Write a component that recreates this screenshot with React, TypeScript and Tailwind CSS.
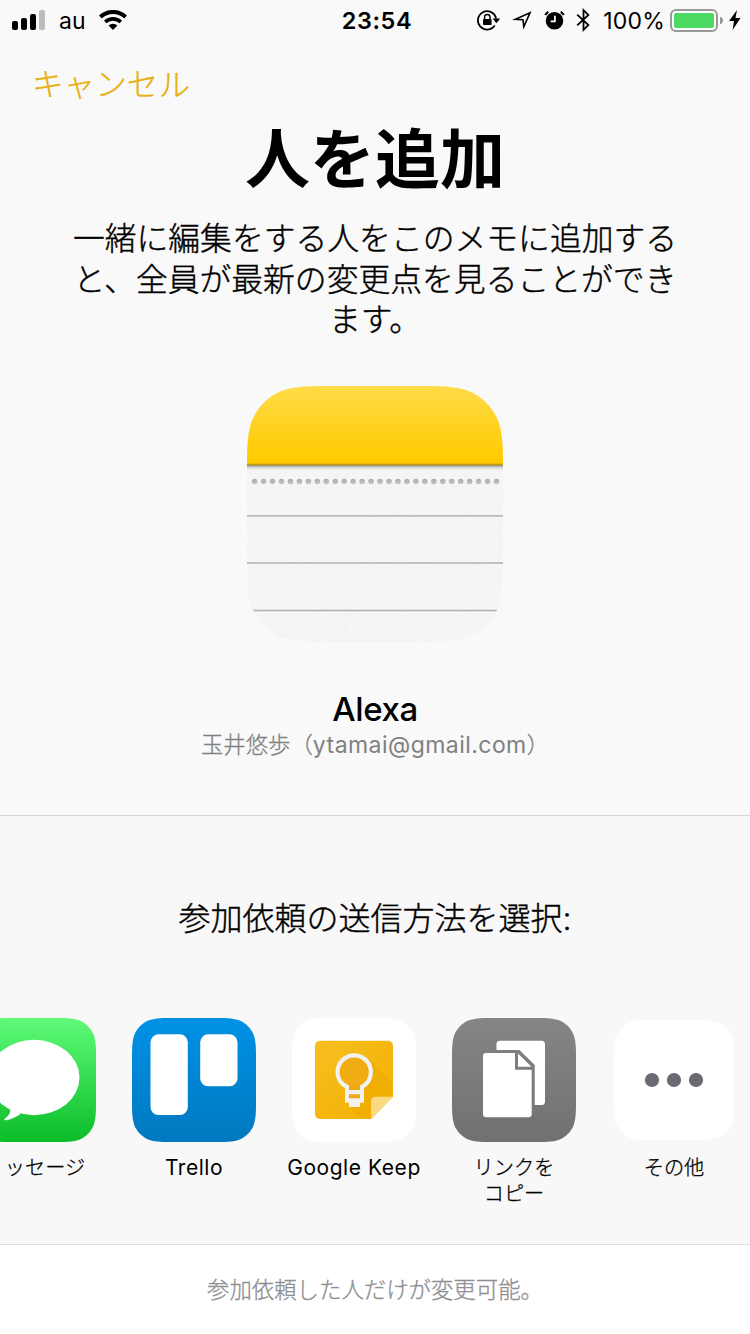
import type { ReactNode } from "react";

const SQUIRCLE =
  "M0 34.4C0 24.5 0 19.54 1.69 14.2C3.8 8.39 8.39 3.8 14.2 1.69C19.54 0 24.5 0 34.4 0H65.6C75.5 0 80.46 0 85.8 1.69C91.61 3.8 96.2 8.39 98.31 14.2C100 19.54 100 24.5 100 34.4V65.6C100 75.5 100 80.46 98.31 85.8C96.2 91.61 91.61 96.2 85.8 98.31C80.46 100 75.5 100 65.6 100H34.4C24.5 100 19.54 100 14.2 98.31C8.39 96.2 3.8 91.61 1.69 85.8C0 80.46 0 75.5 0 65.6Z";

function StatusBar() {
  return (
    <header className="grid h-10 shrink-0 grid-cols-3 items-center text-black">
      <div className="flex items-center pl-3">
        <svg className="shrink-0" width="34" height="20" viewBox="0 0 34 20">
          <rect x="0" y="11" width="6" height="9" rx="2" />
          <rect x="9" y="8" width="6" height="12" rx="2" />
          <rect x="18" y="4" width="6" height="16" rx="2" />
          <rect x="27" y="0" width="6" height="20" rx="2" fill="#bcbcbc" />
        </svg>
        <span className="ml-[13px] pt-px text-[23px] leading-[38px] tracking-[0.2px]">au</span>
        <svg className="ml-[13px] shrink-0" width="28" height="20" viewBox="0 0 28 20">
          <path d="M1.4 7A18.2 18.2 0 0 1 26.6 7" fill="none" stroke="#000" strokeWidth="4" />
          <path d="M6.2 12A11.2 11.2 0 0 1 21.8 12" fill="none" stroke="#000" strokeWidth="3.6" />
          <path d="M14 20L9.6 15.6A6.4 6.4 0 0 1 18.4 15.6Z" />
        </svg>
      </div>
      <div className="pt-[2px] pl-[4px] text-center text-[23.5px] leading-[38px] font-semibold tracking-[0.6px]">23:54</div>
      <div className="flex items-center justify-end pr-[9px]">
        <svg className="shrink-0" width="24" height="22" viewBox="0 0 24 22">
          <path d="M17.7 16.6A9.2 9.2 0 1 1 19.1 9.5" fill="none" stroke="#000" strokeWidth="1.8" />
          <path d="M15.6 9.4H23.2L19.4 14.2Z" />
          <rect x="6" y="10" width="8.6" height="6" rx=".8" />
          <path d="M7.6 10.5V8.1A2.7 2.7 0 0 1 13 8.1V10.5" fill="none" stroke="#000" strokeWidth="1.5" />
        </svg>
        <svg className="ml-3 shrink-0 overflow-visible" width="20" height="20" viewBox="0 0 20 20">
          <path
            d="M2.4 9.3L17 2.8L10.8 16.8L10 9.8Z"
            fill="none"
            stroke="#000"
            strokeWidth="1.6"
            strokeMiterlimit="10"
          />
        </svg>
        <svg className="ml-[11px] shrink-0" width="21" height="20" viewBox="0 0 21 20">
          <circle cx="10.5" cy="10.7" r="8.8" />
          <path d="M1.2 5A10 10 0 0 1 4.3 1.8M19.8 5A10 10 0 0 0 16.7 1.8" stroke="#000" strokeWidth="2" fill="none" />
          <path d="M10.9 5.8V11.3H6.6" fill="none" stroke="#fff" strokeWidth="1.7" />
        </svg>
        <svg className="ml-[11px] shrink-0" width="15" height="24" viewBox="0 0 15 24">
          <path d="M1.2 6.6L12.4 17L7.5 21.8V2.2L12.4 7L1.2 17.4" fill="none" stroke="#000" strokeWidth="1.8" />
        </svg>
        <span className="ml-[12px] pt-px text-[23px] leading-[38px] tracking-[0.2px]">100%</span>
        <svg className="ml-[5px] shrink-0" width="54" height="24" viewBox="0 0 54 24">
          <rect x="1" y="2" width="46" height="21" rx="5" fill="#fff" stroke="#999" strokeWidth="2" />
          <rect x="4" y="5" width="40" height="15" rx="2" fill="#4cd964" />
          <path d="M50 8.8C54 10 54 15 50 16.4Z" fill="#999" />
        </svg>
        <svg className="ml-[5px] shrink-0" width="12" height="20" viewBox="0 0 12 20">
          <path d="M8 0L0 11H5L3.6 20L11.5 8H6.5Z" />
        </svg>
      </div>
    </header>
  );
}

function NotesIcon() {
  return (
    <svg className="block shrink-0" width="256" height="256" viewBox="0 0 256 256">
      <defs>
        <linearGradient id="pad" x1="0" y1="0" x2="0" y2="1">
          <stop offset="0" stopColor="#ffdb48" />
          <stop offset=".8" stopColor="#ffcd0a" />
          <stop offset="1" stopColor="#ffca00" />
        </linearGradient>
        <linearGradient id="shade" x1="0" y1="0" x2="0" y2="1">
          <stop offset="0" stopColor="#d8ac08" />
          <stop offset=".2" stopColor="#b39417" />
          <stop offset=".35" stopColor="#a3a3a3" />
          <stop offset=".6" stopColor="#dcdcdc" />
          <stop offset="1" stopColor="#f4f4f4" />
        </linearGradient>
        <linearGradient id="hole" x1="0" y1="0" x2="0" y2="1">
          <stop offset="0" stopColor="#a9a9a9" />
          <stop offset="1" stopColor="#c6c6c6" />
        </linearGradient>
        <filter id="grain" x="0" y="0" width="1" height="1">
          <feTurbulence type="fractalNoise" baseFrequency=".16" numOctaves="2" seed="4" />
          <feColorMatrix values="0 0 0 0 .8  0 0 0 0 .8  0 0 0 0 .8  .3 0 0 0 -.06" />
        </filter>
        <clipPath id="notes">
          <path d={SQUIRCLE} transform="scale(2.56)" />
        </clipPath>
      </defs>
      <g clipPath="url(#notes)">
        <rect width="256" height="256" fill="#f6f6f6" />
        <rect y="80" width="256" height="176" filter="url(#grain)" />
        <rect width="256" height="79" fill="url(#pad)" />
        <rect y="77.5" width="256" height="7" fill="url(#shade)" />
        {Array.from({ length: 28 }, (_, i) => (
          <circle key={i} cx={7.6 + i * 8.96} cy="95.5" r="2.8" fill="url(#hole)" />
        ))}
        <rect y="129" width="256" height="1.8" fill="#bdbdbd" />
        <rect y="176.2" width="256" height="1.6" fill="#b5b5b5" />
        <rect x="6" y="223.7" width="244" height="1.6" fill="#b2b2b2" />
      </g>
    </svg>
  );
}

function MessagesIcon() {
  return (
    <svg width="124" height="124" viewBox="0 0 124 124">
      <linearGradient id="green" x1="0" y1="0" x2="0" y2="1">
        <stop offset="0" stopColor="#5ffa78" />
        <stop offset="1" stopColor="#0bbd29" />
      </linearGradient>
      <path d={SQUIRCLE} transform="scale(1.24)" fill="url(#green)" />
      <ellipse cx="62" cy="59.5" rx="45.5" ry="37.7" fill="#fff" />
      <path d="M38 90C39 96 36 98 32.4 101C31.8 102 32.5 102.5 33.5 102.3C40 101.5 45 98 49 96Z" fill="#fff" />
    </svg>
  );
}

function TrelloIcon() {
  return (
    <svg width="124" height="124" viewBox="0 0 124 124">
      <linearGradient id="blue" x1="0" y1="0" x2="0" y2="1">
        <stop offset="0" stopColor="#0091e6" />
        <stop offset="1" stopColor="#0079bf" />
      </linearGradient>
      <path d={SQUIRCLE} transform="scale(1.24)" fill="url(#blue)" />
      <rect x="18.5" y="16.3" width="37.3" height="80.7" rx="8" fill="#fff" />
      <rect x="68.2" y="16.3" width="37.3" height="52" rx="8" fill="#fff" />
    </svg>
  );
}

function KeepIcon() {
  return (
    <svg width="124" height="124" viewBox="0 0 124 124">
      <defs>
        <linearGradient id="keep" x1="0" y1="0" x2="1" y2="1">
          <stop offset="0" stopColor="#f6bf20" />
          <stop offset="1" stopColor="#f4b000" />
        </linearGradient>
        <linearGradient id="cast" x1="0" y1="0" x2="1" y2="1">
          <stop offset="0" stopColor="#eea90a" />
          <stop offset="1" stopColor="#f4b002" />
        </linearGradient>
      </defs>
      <path d={SQUIRCLE} transform="scale(1.24)" fill="#fff" />
      <path
        d="M28 22.7H96A5 5 0 0 1 101 27.7V78.7L79 101H28A5 5 0 0 1 23 96V27.7A5 5 0 0 1 28 22.7Z"
        fill="url(#keep)"
      />
      <path d="M76 41L101 66V78.7H84L79 83V101H70L57 88V70L49 66Z" fill="url(#cast)" />
      <path d="M79 101V83.5A5 5 0 0 1 84 78.7H101Z" fill="#fbd981" />
      <path
        d="M55.3 72V69C49 66 45.5 60.5 45.5 54A16.7 16.7 0 0 1 78.9 54C78.9 60.5 75.5 66 69.6 69V72Z"
        fill="#f0ac12"
        stroke="#f1f1f1"
        strokeWidth="4.2"
      />
      <path d="M53 69.5H72V84.8H68V89H57V84.8H53Z" fill="#f1f1f1" />
      <path d="M57 68H68V72H57ZM57 76.2H68V80.3H57Z" fill="#eda911" />
    </svg>
  );
}

function CopyIcon() {
  return (
    <svg width="124" height="124" viewBox="0 0 124 124">
      <linearGradient id="gray" x1="0" y1="0" x2="0" y2="1">
        <stop offset="0" stopColor="#858585" />
        <stop offset="1" stopColor="#717171" />
      </linearGradient>
      <path d={SQUIRCLE} transform="scale(1.24)" fill="url(#gray)" />
      <path
        d="M44.5 32V26A3.5 3.5 0 0 1 48 22.7H89.5A3.5 3.5 0 0 1 93 26.2V83.5A3.5 3.5 0 0 1 89.5 87H82.7V47L67.5 32Z"
        fill="#fff"
      />
      <path
        d="M34 35H63V51.8H79.7V96A3.3 3.3 0 0 1 76.4 99.3H34.3A3.3 3.3 0 0 1 31 96V38A3 3 0 0 1 34 35Z"
        fill="#fff"
      />
      <path d="M66 35.5L79.5 48.7H66Z" fill="#fff" />
    </svg>
  );
}

function MoreIcon() {
  return (
    <svg width="124" height="124" viewBox="0 0 124 124">
      <path d={SQUIRCLE} transform="translate(2 2) scale(1.2)" fill="#fff" />
      <g fill="#6b6a73">
        <circle cx="40" cy="62" r="7.1" />
        <circle cx="62" cy="62" r="7.1" />
        <circle cx="84" cy="62" r="7.1" />
      </g>
    </svg>
  );
}

function ShareItem({ icon, children }: { icon: ReactNode; children: ReactNode }) {
  return (
    <li className="flex w-40 shrink-0 flex-col items-center">
      {icon}
      <div className="mt-[13px] text-center text-[20.2px] leading-[26px] font-light whitespace-nowrap [-webkit-text-stroke:0.3px]">
        {children}
      </div>
    </li>
  );
}

function Latin({ children }: { children: ReactNode }) {
  return <span className="text-[21px] font-normal tracking-[0.55px] [-webkit-text-stroke:0]">{children}</span>;
}

export default function App() {
  return (
    <div
      lang="ja"
      className="flex h-[1334px] w-[750px] flex-col overflow-hidden bg-[#f9f9f9] font-['Inter','Noto_Sans_CJK_JP',sans-serif] text-black"
    >
      <StatusBar />
      <nav className="flex h-[78px] shrink-0 pt-[25px] pl-[32px]">
        <button className="h-10 text-[31.6px] leading-10 font-light text-[#e6b010] [-webkit-text-stroke:0.3px]">
          キャンセル
        </button>
      </nav>
      <main className="flex h-[697px] shrink-0 flex-col items-center">
        <h1 className="h-[101px] text-[65px] leading-[84px] font-bold">人を追加</h1>
        <p className="h-[167px] text-center text-[31.8px] leading-[40.5px] font-light [-webkit-text-stroke:0.4px]">
          一緒に編集をする人をこのメモに追加する
          <br />
          と、全員が最新の変更点を見ることができ
          <br />
          ます。
        </p>
        <NotesIcon />
        <h2 className="mt-[46px] text-[33px] leading-[42px] font-medium tracking-[-0.4px]">Alexa</h2>
        <p className="text-[22.4px] leading-[30px] font-light text-[#808080] [-webkit-text-stroke:0.3px]">
          玉井悠歩（
          <span className="text-[23px] font-normal tracking-[0.45px] [-webkit-text-stroke:0]">ytamai@gmail.com</span>）
        </p>
      </main>
      <section className="flex h-[429px] shrink-0 flex-col border-t border-[#d8d8d8] bg-[#f8f8f8]">
        <h3 className="pt-[82px] text-center text-[32px] leading-[42px] font-light [-webkit-text-stroke:0.4px]">
          参加依頼の送信方法を選択:
        </h3>
        <ul className="mt-[78px] -ml-[46px] flex">
          <ShareItem icon={<MessagesIcon />}>
            <span className="pl-[22px]">ッセージ</span>
          </ShareItem>
          <ShareItem icon={<TrelloIcon />}>
            <Latin>Trello</Latin>
          </ShareItem>
          <ShareItem icon={<KeepIcon />}>
            <Latin>Google Keep</Latin>
          </ShareItem>
          <ShareItem icon={<CopyIcon />}>
            リンクを
            <br />
            コピー
          </ShareItem>
          <ShareItem icon={<MoreIcon />}>その他</ShareItem>
        </ul>
      </section>
      <footer className="flex h-[90px] shrink-0 items-center justify-center border-t border-[#e0e0e4] bg-white text-[22.4px] font-light text-[#8e8e93] [-webkit-text-stroke:0.3px]">
        参加依頼した人だけが変更可能。
      </footer>
    </div>
  );
}
